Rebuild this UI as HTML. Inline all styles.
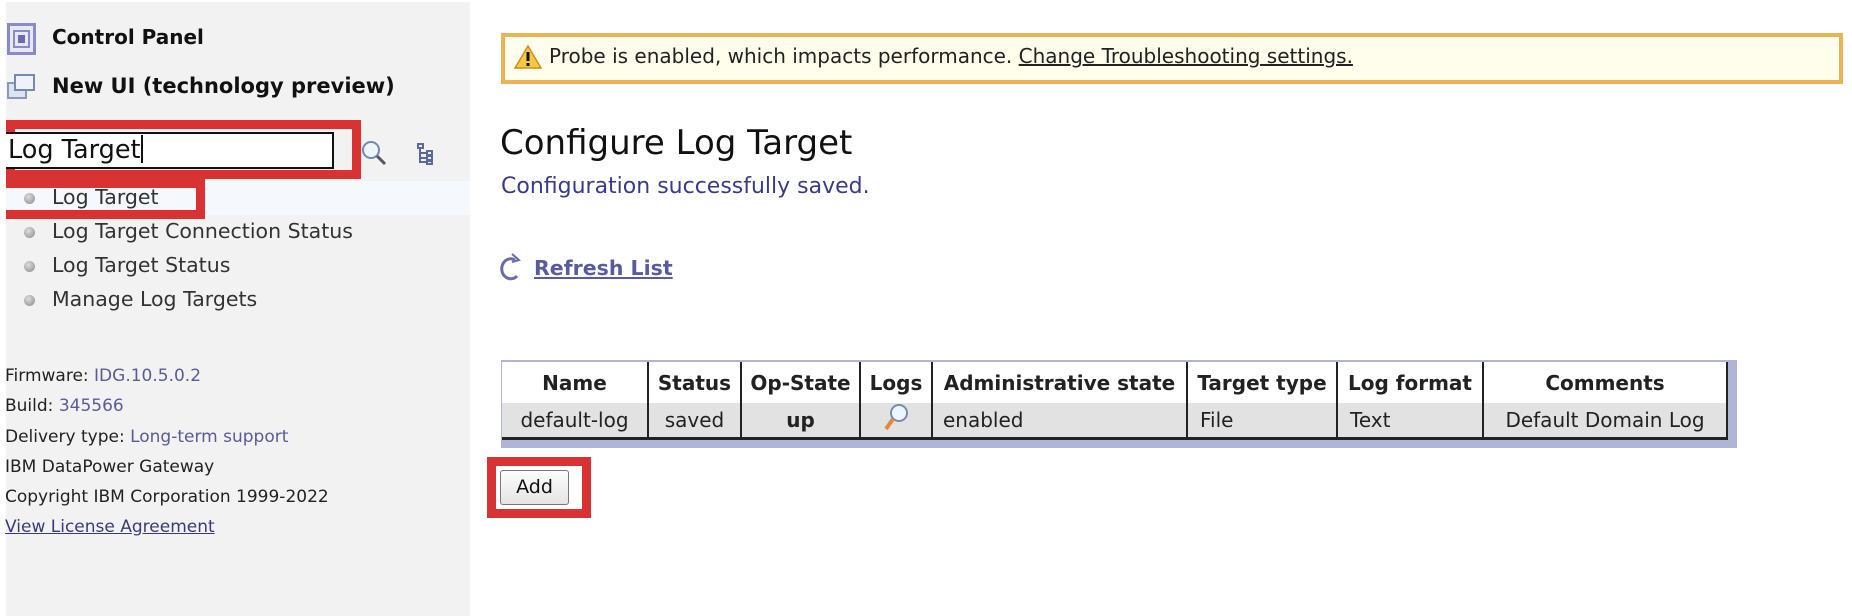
<!DOCTYPE html>
<html><head><meta charset="utf-8"><style>
*{margin:0;padding:0;box-sizing:border-box}
body{width:1852px;height:616px;background:#fff;font-family:"DejaVu Sans","Liberation Sans",sans-serif;position:relative;overflow:hidden;color:#222}
.a{position:absolute;white-space:nowrap}
#side{position:absolute;left:6px;top:2px;width:464px;height:614px;background:#f2f2f2}
.li{font-size:20.5px;color:#333}
.dot{position:absolute;width:11px;height:11px;border-radius:50%;background:radial-gradient(circle at 40% 35%,#ddd,#888)}
.ft{font-size:17px;color:#222}
.ft span{color:#5a5a9a}
table{border-collapse:collapse;font-size:20px;table-layout:fixed}
td,th{border-right:2px solid #222;text-align:center;padding:0 3px;overflow:hidden}
</style></head><body>
<div id="side"></div>
<div class="a" style="left:7px;top:23px;width:29px;height:32px;border:3px solid #8a8ac8;background:#e8e8f4"></div>
<div class="a" style="left:13px;top:30px;width:17px;height:18px;border:2px solid #8a8ac8"></div>
<div class="a" style="left:18px;top:35px;width:7px;height:8px;background:#6a6ab0"></div>
<div class="a" style="left:52px;top:25px;font-size:20px;font-weight:bold;color:#111">Control Panel</div>
<div class="a" style="left:7px;top:82px;width:20px;height:17px;border:2px solid #8899bb;background:#dde4f0"></div>
<div class="a" style="left:14px;top:74px;width:21px;height:17px;border:2px solid #7788aa;background:#eef2fa"></div>
<div class="a" style="left:52px;top:74px;font-size:21px;font-weight:bold;color:#111">New UI (technology preview)</div>
<div class="a" style="left:6px;top:120px;width:355px;height:59px;border:9px solid #d83232"></div>
<div class="a" style="left:6px;top:132px;width:328px;height:37px;border:2px solid #111;border-left:none;background:#fff"></div>
<div class="a" style="left:8px;top:135px;font-size:25.5px;color:#111">Log Target<span style="display:inline-block;width:2px;height:28px;background:#111;vertical-align:-5px"></span></div>
<svg class="a" style="left:360px;top:139px" width="28" height="28"><circle cx="11" cy="11" r="8" fill="#eef4fb" stroke="#7788aa" stroke-width="2"/><line x1="17" y1="17" x2="25" y2="25" stroke="#556" stroke-width="3"/></svg>
<svg class="a" style="left:417px;top:143px" width="20" height="22"><g fill="none" stroke="#5a6aa0" stroke-width="2"><rect x="1" y="1" width="5" height="4"/><path d="M3 5v14h6M3 10h6M3 15h6"/><rect x="10" y="8" width="5" height="4"/><rect x="10" y="13" width="5" height="4"/><rect x="10" y="18" width="5" height="3"/></g></svg>
<div class="a" style="left:6px;top:181px;width:464px;height:34px;background:#f5f8fc"></div>
<div class="a" style="left:6px;top:179px;width:199px;height:40px;border:9px solid #d83232;border-left:none"></div>
<div class="dot" style="left:24px;top:193px"></div><div class="a li" style="left:52px;top:185px">Log Target</div>
<div class="dot" style="left:24px;top:227px"></div><div class="a li" style="left:52px;top:219px">Log Target Connection Status</div>
<div class="dot" style="left:24px;top:261px"></div><div class="a li" style="left:52px;top:253px">Log Target Status</div>
<div class="dot" style="left:24px;top:295px"></div><div class="a li" style="left:52px;top:287px">Manage Log Targets</div>
<div class="a ft" style="left:5px;top:366px">Firmware: <span>IDG.10.5.0.2</span></div>
<div class="a ft" style="left:5px;top:396px">Build: <span>345566</span></div>
<div class="a ft" style="left:5px;top:427px">Delivery type: <span>Long-term support</span></div>
<div class="a ft" style="left:5px;top:457px">IBM DataPower Gateway</div>
<div class="a ft" style="left:5px;top:487px">Copyright IBM Corporation 1999-2022</div>
<div class="a ft" style="left:5px;top:517px;color:#3a3a7a;text-decoration:underline">View License Agreement</div>
<div class="a" style="left:501px;top:33px;width:1342px;height:51px;border:4px solid #e8b454;background:#fffdeb"></div>
<svg class="a" style="left:514px;top:44px" width="28" height="26"><path d="M14 2L27 24H1Z" fill="#f5c842" stroke="#c89020" stroke-width="1.5"/><rect x="12.5" y="8" width="3" height="9" fill="#111"/><rect x="12.5" y="19" width="3" height="3" fill="#111"/></svg>
<div class="a" style="left:549px;top:44px;font-size:20px;color:#222">Probe is enabled, which impacts performance. <span style="text-decoration:underline;color:#222">Change Troubleshooting settings.</span></div>
<div class="a" style="left:500px;top:123px;font-size:34px;color:#111">Configure Log Target</div>
<div class="a" style="left:501px;top:174px;font-size:22px;color:#3a3a8a">Configuration successfully saved.</div>
<svg class="a" style="left:500px;top:252px" width="22" height="30"><path d="M15 8A9 10 0 1 0 17 24" fill="none" stroke="#6a6ab0" stroke-width="3"/><path d="M12 2L19 8L12 10" fill="none" stroke="#6a6ab0" stroke-width="2"/></svg>
<div class="a" style="left:534px;top:256px;font-size:20.5px;font-weight:bold;color:#5a5aa0;text-decoration:underline">Refresh List</div>
<div class="a" style="left:501px;top:360px;width:1236px;height:88px;background:#b0b4d6"></div>
<table class="a" style="left:502px;top:362px;width:1226px">
<tr style="height:41px;background:#fff;font-weight:bold"><th style="width:146px">Name</th><th style="width:93px">Status</th><th style="width:119px">Op-State</th><th style="width:72px">Logs</th><th style="width:255px">Administrative state</th><th style="width:150px">Target type</th><th style="width:146px">Log format</th><th>Comments</th></tr>
<tr style="height:35px;background:#e2e2e2;border-bottom:3px solid #222"><td>default-log</td><td>saved</td><td style="font-weight:bold">up</td><td><svg width="26" height="28"><circle cx="16" cy="10" r="8" fill="#eef6ff" stroke="#7a8ab0" stroke-width="2"/><line x1="10" y1="16" x2="3" y2="26" stroke="#e08a40" stroke-width="4"/></svg></td><td style="text-align:left;padding-left:10px">enabled</td><td style="text-align:left;padding-left:12px">File</td><td style="text-align:left;padding-left:12px">Text</td><td>Default Domain Log</td></tr>
</table>
<div class="a" style="left:487px;top:457px;width:104px;height:61px;border:9px solid #d83232"></div>
<div class="a" style="left:500px;top:470px;width:69px;height:35px;border:1px solid #777;border-radius:3px;background:linear-gradient(#fdfdfd,#e4e4e4);font-size:19px;text-align:center;line-height:33px;color:#111">Add</div>
</body></html>
